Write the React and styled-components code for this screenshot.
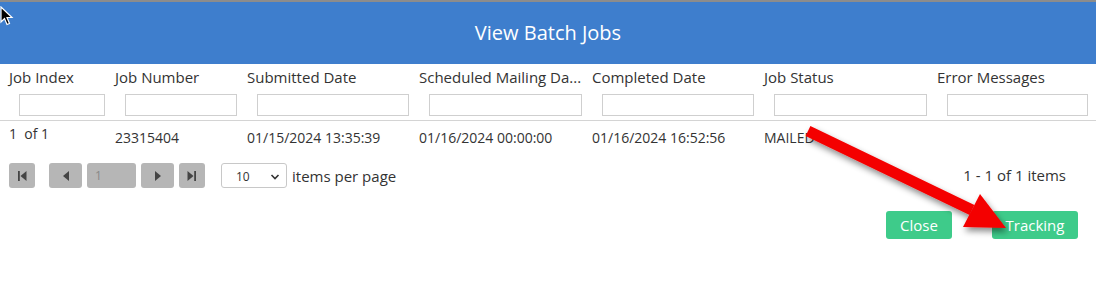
import React from "react";
import styled, { createGlobalStyle } from "styled-components";

const GlobalStyle = createGlobalStyle`
    html, body {
        margin: 0;
        padding: 0;
        background: #fff;
        font-family: "Open Sans", "Noto Sans", sans-serif;
    }
`;

const columns = [
    { label: "Job Index", value: "1  of 1", raised: true },
    { label: "Job Number", value: "23315404" },
    { label: "Submitted Date", value: "01/15/2024 13:35:39" },
    { label: "Scheduled Mailing Da...", value: "01/16/2024 00:00:00" },
    { label: "Completed Date", value: "01/16/2024 16:52:56" },
    { label: "Job Status", value: "MAILED" },
    { label: "Error Messages", value: "" },
];

const App = () => {
    return (
        <>
            <GlobalStyle />
            <Dialog>
                <Header>View Batch Jobs</Header>
                <Grid>
                    {columns.map((c) => (
                        <HeadCell key={c.label}>{c.label}</HeadCell>
                    ))}
                    {columns.map((c) => (
                        <FilterCell key={c.label + "f"}>
                            <FilterInput />
                        </FilterCell>
                    ))}
                </Grid>
                <Divider />
                <Grid>
                    {columns.map((c) => (
                        <DataCell key={c.label + "d"} $raised={c.raised}>
                            {c.value}
                        </DataCell>
                    ))}
                </Grid>
                <Pager>
                    <PagerLeft>
                        <PageButton>
                            <svg width="12" height="12" viewBox="0 0 12 12">
                                <rect x="2" y="1" width="1.8" height="10" fill="#444" />
                                <path d="M10.5 1 L4.5 6 L10.5 11 Z" fill="#444" />
                            </svg>
                        </PageButton>
                        <PageButton $wide>
                            <svg width="12" height="12" viewBox="0 0 12 12">
                                <path d="M9 1 L3 6 L9 11 Z" fill="#444" />
                            </svg>
                        </PageButton>
                        <PageNumber>1</PageNumber>
                        <PageButton $wide>
                            <svg width="12" height="12" viewBox="0 0 12 12">
                                <path d="M3 1 L9 6 L3 11 Z" fill="#444" />
                            </svg>
                        </PageButton>
                        <PageButton>
                            <svg width="12" height="12" viewBox="0 0 12 12">
                                <path d="M1.5 1 L7.5 6 L1.5 11 Z" fill="#444" />
                                <rect x="8.2" y="1" width="1.8" height="10" fill="#444" />
                            </svg>
                        </PageButton>
                        <SizeSelect>
                            <span>10</span>
                            <svg width="10" height="8" viewBox="0 0 10 8">
                                <path d="M1.5 2 L5 5.5 L8.5 2" stroke="#333" strokeWidth="1.6" fill="none" />
                            </svg>
                        </SizeSelect>
                        <PerPage>items per page</PerPage>
                    </PagerLeft>
                    <ItemsInfo>1 - 1 of 1 items</ItemsInfo>
                </Pager>
                <Actions>
                    <ActionButton>Close</ActionButton>
                    <ActionButton $wide>Tracking</ActionButton>
                </Actions>
                <Annotation width="1096" height="288" viewBox="0 0 1096 288">
                    <defs>
                        <filter id="sh" x="-20%" y="-20%" width="140%" height="140%">
                            <feDropShadow dx="2" dy="4" stdDeviation="3" floodColor="#000" floodOpacity="0.45" />
                        </filter>
                    </defs>
                    <g filter="url(#sh)">
                        <line x1="808" y1="131" x2="972" y2="210" stroke="#f40000" strokeWidth="11" />
                        <path d="M980 194 L1006 228 L963 227 Z" fill="#f40000" />
                    </g>
                </Annotation>
                <Cursor width="14" height="20" viewBox="0 0 14 20">
                    <path d="M1 1 L1 16 L4.5 12.5 L7 18.5 L9.5 17.5 L7 11.5 L12 11.5 Z" fill="#000" stroke="#fff" strokeWidth="1.2" />
                </Cursor>
            </Dialog>
        </>
    );
};

export default App;

const Dialog = styled.div`
    position: relative;
    width: 1096px;
    height: 288px;
    overflow: hidden;
    background: #fff;
    border-top: 2px solid #8c8c8c;
    box-sizing: border-box;
`;

const Header = styled.div`
    height: 62px;
    background: #3e7ecd;
    color: #fff;
    font-size: 20px;
    display: flex;
    align-items: center;
    justify-content: center;
    padding-bottom: 2px;
    box-sizing: border-box;
`;

const Grid = styled.div`
    display: grid;
    grid-template-columns: 106px 132px 172px 173px 172px 173px 1fr;
    padding-left: 9px;
`;

const HeadCell = styled.div`
    font-size: 15px;
    color: #333;
    line-height: 20px;
    padding-top: 3px;
    white-space: nowrap;
`;

const FilterCell = styled.div`
    padding: 7px 10px 0 10px;
    height: 29px;
    box-sizing: border-box;
    &:last-child {
        padding-right: 8px;
    }
`;

const FilterInput = styled.div`
    height: 22px;
    border: 1px solid #cfcfcf;
    box-sizing: border-box;
    background: #fff;
`;

const Divider = styled.div`
    margin-top: 4px;
    height: 1px;
    background: #d4d4d4;
`;

const DataCell = styled.div`
    font-size: 14px;
    color: #333;
    padding-top: ${(p) => (p.$raised ? "3px" : "7px")};
    height: 30px;
    white-space: pre;
`;

const Pager = styled.div`
    display: flex;
    align-items: center;
    justify-content: space-between;
    padding: 5px 30px 0 9px;
`;

const PagerLeft = styled.div`
    display: flex;
    align-items: center;
`;

const PageButton = styled.div`
    width: ${(p) => (p.$wide ? "33px" : "26px")};
    height: 25px;
    background: #b6b6b6;
    border-radius: 3px;
    display: flex;
    align-items: center;
    justify-content: center;
    margin-right: 5px;
    &:first-child {
        margin-right: 14px;
    }
`;

const PageNumber = styled.div`
    width: 49px;
    height: 25px;
    background: #b6b6b6;
    border-radius: 3px;
    margin-right: 5px;
    font-size: 12px;
    color: #888;
    display: flex;
    align-items: center;
    padding-left: 8px;
    box-sizing: border-box;
`;

const SizeSelect = styled.div`
    margin-left: 11px;
    width: 66px;
    height: 25px;
    border: 1px solid #c8c8c8;
    border-radius: 3px;
    box-sizing: border-box;
    display: flex;
    align-items: center;
    justify-content: space-between;
    padding: 2px 6px 0 14px;
    font-size: 12px;
    color: #333;
`;

const PerPage = styled.span`
    margin-left: 5px;
    font-size: 15px;
    color: #333;
`;

const ItemsInfo = styled.span`
    font-size: 15px;
    color: #333;
    margin-top: -2px;
`;

const Actions = styled.div`
    display: flex;
    justify-content: flex-end;
    gap: 40px;
    padding: 23px 18px 0 0;
`;

const ActionButton = styled.div`
    width: ${(p) => (p.$wide ? "86px" : "66px")};
    height: 28px;
    background: #3ecb8a;
    color: #fff;
    border-radius: 3px;
    font-size: 15px;
    display: flex;
    align-items: center;
    justify-content: center;
`;

const Annotation = styled.svg`
    position: absolute;
    left: 0;
    top: -2px;
    pointer-events: none;
`;

const Cursor = styled.svg`
    position: absolute;
    left: 0;
    top: 4px;
`;
